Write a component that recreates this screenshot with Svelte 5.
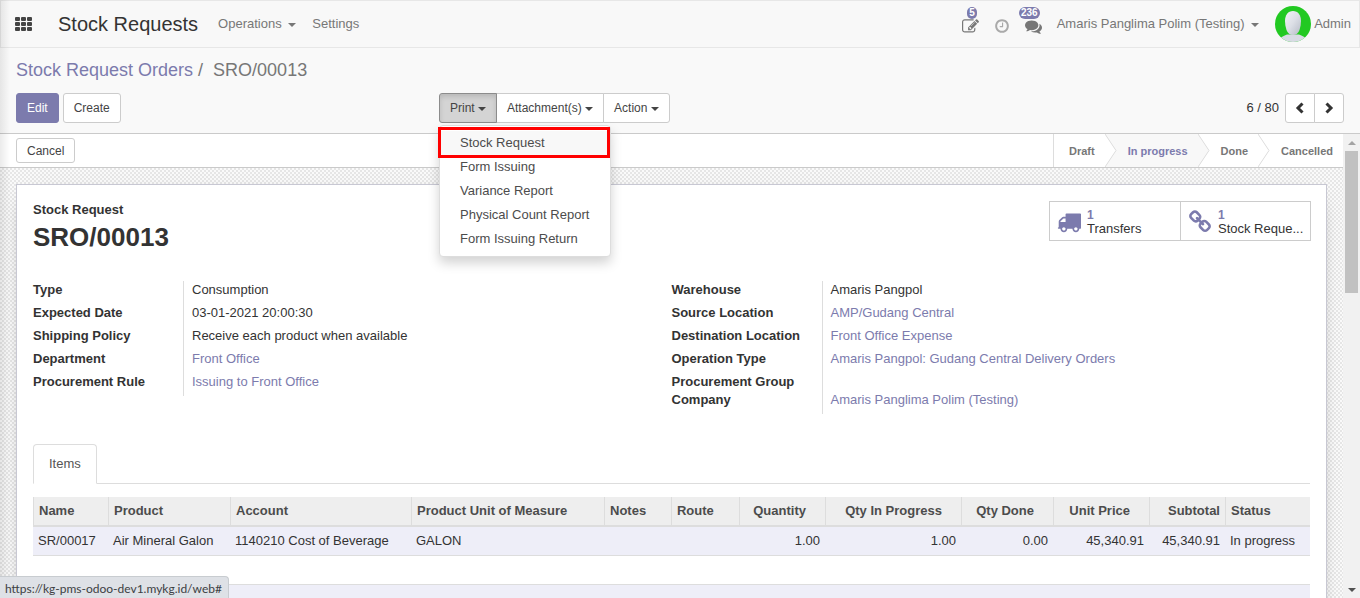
<script>
  const columns = [
    { title: 'Name', size: 75, value: 'SR/00017' },
    { title: 'Product', size: 122, value: 'Air Mineral Galon' },
    { title: 'Account', size: 181, value: '1140210 Cost of Beverage' },
    { title: 'Product Unit of Measure', size: 193, value: 'GALON' },
    { title: 'Notes', size: 67, value: '' },
    { title: 'Route', size: 68, value: '' },
    { title: 'Quantity', size: 86, value: '1.00', kind: 'num sortable' },
    { title: 'Qty In Progress', size: 136, value: '1.00', kind: 'num sortable' },
    { title: 'Qty Done', size: 92, value: '0.00', kind: 'num sortable' },
    { title: 'Unit Price', size: 96, value: '45,340.91', kind: 'num sortable' },
    { title: 'Subtotal', size: 76, value: '45,340.91', kind: 'num' },
    { title: 'Status', size: 85, value: 'In progress' }
  ];
  const total = columns.reduce((sum, c) => sum + c.size, 0);

  const groups = [
    [
      { label: 'Type', value: 'Consumption' },
      { label: 'Expected Date', value: '03-01-2021 20:00:30' },
      { label: 'Shipping Policy', value: 'Receive each product when available' },
      { label: 'Department', value: 'Front Office', link: true },
      { label: 'Procurement Rule', value: 'Issuing to Front Office', link: true }
    ],
    [
      { label: 'Warehouse', value: 'Amaris Pangpol' },
      { label: 'Source Location', value: 'AMP/Gudang Central', link: true },
      { label: 'Destination Location', value: 'Front Office Expense', link: true },
      { label: 'Operation Type', value: 'Amaris Pangpol: Gudang Central Delivery Orders', link: true },
      { label: 'Procurement Group', value: '' },
      { label: 'Company', value: 'Amaris Panglima Polim (Testing)', link: true }
    ]
  ];

  const reports = ['Stock Request', 'Form Issuing', 'Variance Report', 'Physical Count Report', 'Form Issuing Return'];
  const states = ['Draft', 'In progress', 'Done', 'Cancelled'];
  let current = $state('In progress');
  let printOpen = $state(true);

  const icons = {
    edit: 'M888 1184l116-116-152-152-116 116v56h96v96h56zm440-720q-16-16-33 1l-350 350q-17 17-1 33t33-1l350-350q17-17 1-33zm80 594v190q0 119-84.5 203.5t-203.5 84.5h-832q-119 0-203.5-84.5t-84.5-203.5v-832q0-119 84.5-203.5t203.5-84.5h832q63 0 117 25 15 7 18 23 3 17-9 29l-49 49q-14 14-32 8-23-6-45-6h-832q-66 0-113 47t-47 113v832q0 66 47 113t113 47h832q66 0 113-47t47-113v-126q0-13 9-22l64-64q15-15 35-7t20 29zm-96-738l288 288-672 672h-288v-288zm444 132l-92 92-288-288 92-92q28-28 68-28t68 28l152 152q28 28 28 68t-28 68z',
    clock: 'M1024 544v448q0 14-9 23t-23 9h-320q-14 0-23-9t-9-23v-64q0-14 9-23t23-9h224v-352q0-14 9-23t23-9h64q14 0 23 9t9 23zm416 352q0-148-73-273t-198-198-273-73-273 73-198 198-73 273 73 273 198 198 273 73 273-73 198-198 73-273zm224 0q0 209-103 385.5t-279.5 279.5-385.5 103-385.5-103-279.5-279.5-103-385.5 103-385.5 279.5-279.5 385.5-103 385.5 103 279.5 279.5 103 385.5z',
    comments: 'M1408 768q0 139-94 257t-256.5 186.5-353.5 68.5q-86 0-176-16-124 88-278 128-36 9-86 16h-3q-11 0-20.5-8t-11.5-21q-1-3-1-6.5t.5-6.5 2-6l2.5-5 3.5-5.5 4-5 4.5-5 4-4.5q5-6 23-25t26-29.5 22.5-29 25-38.5 20.5-44q-124-72-195-177t-71-224q0-139 94-257t256.5-186.5 353.5-68.5 353.5 68.5 256.5 186.5 94 257zm384 256q0 120-71 224.5t-195 176.5q10 24 20.5 44t25 38.5 22.5 29 26 29.5 23 25q1 1 4 4.5t4.5 5 4 5 3.5 5.5l2.5 5 2 6 .5 6.5-1 6.5q-3 14-13 22t-22 7q-50-7-86-16-154-40-278-128-90 16-176 16-271 0-472-132 58 4 88 4 161 0 309-45t264-129q125-92 192-212t67-254q0-77-23-152 129 71 204 178t75 230z',
    truck: 'M640 1408q0-52-38-90t-90-38-90 38-38 90 38 90 90 38 90-38 38-90zm-384-512h384v-256h-158q-13 0-22 9l-195 195q-9 9-9 22v30zm1280 512q0-52-38-90t-90-38-90 38-38 90 38 90 90 38 90-38 38-90zm256-1088v1024q0 15-4 26.5t-13.5 18.5-16.5 11.5-23.5 6-22.5 2-25.5 0-22.5-.5q0 106-75 181t-181 75-181-75-75-181h-384q0 106-75 181t-181 75-181-75-75-181h-64q-3 0-22.5.5t-25.5 0-22.5-2-23.5-6-16.5-11.5-13.5-18.5-4-26.5q0-26 19-45t45-19v-320q0-8-.5-35t0-38 2.5-34.5 6.5-37 14-30.5 22.5-30l198-198q19-19 50.5-32t58.5-13h160v-192q0-26 19-45t45-19h1024q26 0 45 19t19 45z',
    chain: 'M1520 1216q0-40-28-68l-208-208q-28-28-68-28-42 0-72 32 3 3 19 18.5t21.5 21.5 15 19 13 25.5 3.5 27.5q0 40-28 68t-68 28q-15 0-27.5-3.5t-25.5-13-19-15-21.5-21.5-18.5-19q-33 31-33 73 0 40 28 68l206 207q27 27 68 27 40 0 68-26l147-146q28-28 28-67zm-703-705q0-40-28-68l-206-207q-28-28-68-28-39 0-68 27l-147 146q-28 28-28 67 0 40 28 68l208 208q27 27 68 27 42 0 72-31-3-3-19-18.5t-21.5-21.5-15-19-13-25.5-3.5-27.5q0-40 28-68t68-28q15 0 27.5 3.5t25.5 13 19 15 21.5 21.5 18.5 19q33-31 33-73zm895 705q0 120-85 203l-147 146q-83 83-203 83-121 0-204-85l-206-207q-83-83-83-203 0-123 88-209l-88-88q-86 88-208 88-120 0-204-84l-208-208q-84-84-84-204t85-203l147-146q83-83 203-83 121 0 204 85l206 207q83 83 83 203 0 123-88 209l88 88q86-88 208-88 120 0 204 84l208 208q84 84 84 204z'
  };
</script>

{#snippet icon(name, size)}
  <svg class="icon" width={size} height={size} viewBox="0 0 1792 1792" aria-hidden="true"><path d={icons[name]} /></svg>
{/snippet}

<div class="app">
  <nav class="navbar">
    <button class="plain apps" aria-label="Applications">
      <svg width="18" height="14" viewBox="0 0 18 14" aria-hidden="true">
        {#each [0, 5, 10] as y}
          {#each [0, 6, 12] as x}
            <rect {x} {y} width="5" height="4" rx="1" />
          {/each}
        {/each}
      </svg>
    </button>
    <a class="brand" href="#home">Stock Requests</a>
    <button class="plain menu">Operations <i class="caret"></i></button>
    <a class="menu" href="#settings">Settings</a>
    <div class="systray">
      <button class="plain tray" aria-label="Notes">{@render icon('edit', 17)}<span class="badge">5</span></button>
      <button class="plain tray clock" aria-label="Activities">{@render icon('clock', 16)}</button>
      <button class="plain tray" aria-label="Conversations">{@render icon('comments', 17)}<span class="badge">236</span></button>
      <button class="plain company">Amaris Panglima Polim (Testing) <i class="caret"></i></button>
      <button class="plain user">
        <svg width="36" height="36" viewBox="0 0 36 36" aria-hidden="true">
          <defs>
            <clipPath id="round"><circle cx="18" cy="18" r="18" /></clipPath>
            <linearGradient id="face" x1="0" y1="0" x2="1" y2="1">
              <stop offset="0" stop-color="#f2f3f6" />
              <stop offset="0.5" stop-color="#dcdfe6" />
              <stop offset="1" stop-color="#b5bac6" />
            </linearGradient>
          </defs>
          <g clip-path="url(#round)">
            <rect width="36" height="36" fill="#22c922" />
            <path d="M3 36c1-4 4-5.500 9-7.500h12c5 2 8 3.500 9 7.500z" fill="#d8dbe4" />
            <path d="M18 5c5 0 8 4 8 10 0 3-.5 6-1.500 9-1 3-3.500 5-6.500 5s-5.500-2-6.500-5c-1-3-1.500-6-1.500-9 0-6 3-10 8-10z" fill="url(#face)" />
          </g>
        </svg>
        <span>Admin</span>
      </button>
    </div>
  </nav>

  <header class="panel">
    <ol class="crumbs">
      <li><a href="#orders">Stock Request Orders</a></li>
      <li class="here">SRO/00013</li>
    </ol>
    <div class="actions">
      <div class="main-buttons">
        <button class="btn primary">Edit</button>
        <button class="btn">Create</button>
      </div>
      <div class="side">
        <div class="group">
          <button class="btn" class:pressed={printOpen} aria-expanded={printOpen} onclick={() => (printOpen = !printOpen)}>Print <i class="caret"></i></button>
          <button class="btn">Attachment(s) <i class="caret"></i></button>
          <button class="btn">Action <i class="caret"></i></button>
          {#if printOpen}
            <ul class="dropdown">
              {#each reports as report, i}
                <li class:marked={i === 0}><a href="#report">{report}</a></li>
              {/each}
            </ul>
          {/if}
        </div>
        <div class="pager">
          <span>6 / 80</span>
          <div class="group">
            <button class="btn step" aria-label="Previous"><svg width="10" height="12" viewBox="0 0 10 12"><path d="M7.500 1.500 3 6l4.500 4.500" /></svg></button>
            <button class="btn step" aria-label="Next"><svg width="10" height="12" viewBox="0 0 10 12"><path d="M2.500 1.500 7 6l-4.500 4.500" /></svg></button>
          </div>
        </div>
      </div>
    </div>
  </header>

  <div class="body">
    <main class="content">
      <div class="statusbar">
        <button class="btn small">Cancel</button>
        <div class="states">
          {#each states as state, i}
            <button class="plain state" class:current={state === current} onclick={() => (current = state)}>
              {state}
              {#if i < states.length - 1}
                <svg class="arrow" width="12" height="33" viewBox="0 0 12 33" aria-hidden="true"><path d="M0 0 11 16.500 0 33" /></svg>
              {/if}
            </button>
          {/each}
        </div>
      </div>

      <div class="backdrop">
        <section class="sheet">
          <div class="top">
            <div class="title">
              <strong>Stock Request</strong>
              <h1>SRO/00013</h1>
            </div>
            <div class="stats">
              <button class="plain stat">{@render icon('truck', 24)}<span><b>1</b><em>Transfers</em></span></button>
              <button class="plain stat">{@render icon('chain', 24)}<span><b>1</b><em>Stock Reque...</em></span></button>
            </div>
          </div>

          <div class="fields">
            {#each groups as group}
              <dl>
                {#each group as field}
                  <div class="field" class:empty={!field.value}>
                    <dt>{field.label}</dt>
                    <dd>{#if field.link}<a href="#record">{field.value}</a>{:else}{field.value}{/if}</dd>
                  </div>
                {/each}
              </dl>
            {/each}
          </div>

          <div class="tabs"><button class="plain tab">Items</button></div>

          <table>
            <colgroup>
              {#each columns as c}<col style="width: {(c.size / total) * 100}%" />{/each}
            </colgroup>
            <thead>
              <tr>{#each columns as c}<th class={c.kind}>{c.title}</th>{/each}</tr>
            </thead>
            <tbody>
              <tr>{#each columns as c}<td class={c.kind}>{c.value}</td>{/each}</tr>
              <tr class="blank"><td colspan={columns.length}></td></tr>
            </tbody>
            <tfoot>
              <tr><td colspan={columns.length}></td></tr>
            </tfoot>
          </table>
        </section>
      </div>
    </main>
    <div class="scrollbar" aria-hidden="true">
      <i class="up"></i>
      <div class="track"><div class="thumb"></div></div>
      <i class="down"></i>
    </div>
  </div>
  <div class="address">https://kg-pms-odoo-dev1.mykg.id/web#</div>
</div>

<style>
  :global(body) {
    margin: 0;
  }
  .app {
    --brand: #7c7bad;
    position: relative;
    display: flex;
    flex-direction: column;
    height: 100vh;
    overflow: hidden;
    font: 13px/18px "Liberation Sans", Arial, sans-serif;
    color: #333;
    background: #f9f9f9;
  }
  .app::before {
    content: "";
    position: absolute;
    inset: 0 auto 0 0;
    width: 10px;
    background: linear-gradient(to right, rgba(0, 0, 0, 0.08), transparent);
    pointer-events: none;
    z-index: 2;
  }
  .app *,
  .app *::before {
    box-sizing: border-box;
  }
  a {
    color: var(--brand);
    text-decoration: none;
  }
  button {
    font: inherit;
    cursor: pointer;
  }
  .plain {
    border: 0;
    padding: 0;
    background: none;
    color: inherit;
  }
  .icon {
    display: block;
    fill: currentColor;
  }
  .caret {
    display: inline-block;
    border: 4px solid transparent;
    border-top-color: currentColor;
    border-bottom: 0;
    vertical-align: middle;
  }

  .navbar {
    display: flex;
    align-items: center;
    flex: none;
    height: 48px;
    border: 1px solid #e7e7e7;
    background: #f8f8f8;
    color: #777;
  }
  .apps {
    padding: 0 14px;
    fill: #444;
  }
  .apps svg {
    display: block;
  }
  .brand {
    margin: 0 20px 0 11px;
    font-size: 20px;
    color: #333;
  }
  .menu {
    margin-right: 16px;
    color: #777;
  }
  .menu .caret,
  .company .caret {
    margin-left: 3px;
  }
  .systray {
    display: flex;
    align-items: center;
    margin-left: auto;
    padding-right: 8px;
  }
  .tray {
    position: relative;
    margin: 4px 15px 0 0;
  }
  .clock {
    color: #aaa;
  }
  .badge {
    position: absolute;
    right: 2px;
    bottom: 16px;
    padding: 1px 2px;
    border-radius: 10px;
    background: var(--brand);
    color: #fff;
    font: bold 10px/10px "Liberation Sans", Arial, sans-serif;
  }
  .user {
    display: flex;
    align-items: center;
    gap: 3px;
    margin-left: 16px;
  }

  .panel {
    flex: none;
    padding: 12px 16px 10px;
    border-bottom: 1px solid #cacaca;
  }
  .crumbs {
    display: flex;
    margin: 0 0 13px;
    padding: 0;
    list-style: none;
    font-size: 18px;
    line-height: 20px;
  }
  .here {
    color: #777;
  }
  .here::before {
    content: "/";
    padding: 0 10px 0 5px;
  }
  .actions {
    display: grid;
    grid-template-columns: 423fr 905fr;
  }
  .main-buttons {
    display: flex;
    gap: 4px;
  }
  .side {
    display: flex;
    justify-content: space-between;
  }
  .btn {
    height: 30px;
    padding: 0 10px;
    border: 1px solid #ccc;
    border-radius: 3px;
    background: #fff;
    color: #444;
    font-size: 12px;
  }
  .btn.primary {
    border-color: var(--brand);
    background: var(--brand);
    color: #fff;
  }
  .group {
    position: relative;
    display: flex;
  }
  .group .btn {
    border-radius: 0;
    margin-left: -1px;
  }
  .group .btn:first-child {
    margin-left: 0;
    border-radius: 3px 0 0 3px;
  }
  .group .btn:nth-of-type(n + 2):last-of-type {
    border-radius: 0 3px 3px 0;
  }
  .group .pressed {
    position: relative;
    border-color: #8c8c8c;
    background: #d4d4d4;
    box-shadow: inset 0 3px 5px rgba(0, 0, 0, 0.125);
    z-index: 1;
  }
  .dropdown {
    position: absolute;
    top: 100%;
    left: 0;
    margin: 2px 0 0;
    padding: 5px 0;
    width: 172px;
    border: 1px solid #ddd;
    border-radius: 4px;
    background: #fff;
    box-shadow: 0 6px 12px rgba(0, 0, 0, 0.175);
    list-style: none;
    z-index: 3;
  }
  .dropdown a {
    display: block;
    padding: 3px 20px;
    color: #4c4c4c;
  }
  .marked {
    position: relative;
    background: #f8f8f8;
  }
  .marked::before {
    content: "";
    position: absolute;
    inset: -4px 0 -3px -2px;
    border: 3px solid #f00;
  }
  .pager {
    display: flex;
    align-items: center;
    gap: 6px;
  }
  .group .step {
    padding: 0 9px;
  }
  .step svg {
    display: block;
    fill: none;
    stroke: #333;
    stroke-width: 3;
  }

  .body {
    display: flex;
    flex: 1;
    min-height: 0;
  }
  .content {
    flex: 1;
    min-width: 0;
    overflow: hidden;
    background: #fff;
  }
  .statusbar {
    display: flex;
    justify-content: space-between;
    align-items: center;
    height: 34px;
    padding-left: 16px;
    border-bottom: 1px solid #cacaca;
  }
  .btn.small {
    height: 25px;
  }
  .states {
    display: flex;
    height: 33px;
    border-left: 1px solid #ddd;
  }
  .state {
    position: relative;
    padding: 0 10px 0 23px;
    font-size: 11px;
    font-weight: bold;
    color: #777;
  }
  .state:first-child {
    padding-left: 15px;
  }
  .current {
    background: #f8f8f8;
    color: var(--brand);
  }
  .arrow {
    position: absolute;
    left: 100%;
    top: 0;
    fill: #fff;
    stroke: #ddd;
    z-index: 1;
  }
  .current .arrow {
    fill: #f8f8f8;
  }

  .backdrop {
    padding: 16px;
    background: repeating-conic-gradient(#e6e6e6 0 25%, #fafafa 0 50%) 0 0 / 4px 4px;
  }
  .sheet {
    min-height: 500px;
    padding: 16px;
    border: 1px solid #c8c8d3;
    background: #fff;
    box-shadow: 0 5px 20px -15px #000;
  }
  .top {
    display: flex;
    justify-content: space-between;
    align-items: flex-start;
  }
  .title strong {
    display: block;
    line-height: 17px;
  }
  h1 {
    margin: 5px 0 0;
    font-size: 26px;
    line-height: 28px;
  }
  .stats {
    display: flex;
    margin-right: -1px;
    border: 1px solid #ccc;
  }
  .stat {
    display: flex;
    align-items: center;
    gap: 6px;
    min-width: 130px;
    height: 38px;
    padding: 2px 6px 0 7px;
    text-align: left;
    color: var(--brand);
  }
  .stat .icon {
    flex: none;
  }
  .stat + .stat {
    border-left: 1px solid #ccc;
  }
  .stat span {
    line-height: 14px;
    white-space: nowrap;
  }
  .stat b,
  .stat em {
    display: block;
    font-style: normal;
  }
  .stat b {
    font-size: 12px;
  }
  .stat em {
    color: #333;
  }
  .fields {
    display: grid;
    grid-template-columns: 1fr 1fr;
    align-items: start;
    margin-top: 30px;
  }
  dl {
    margin: 0;
  }
  .field {
    display: grid;
    grid-template-columns: 150px 1fr;
  }
  dt,
  dd {
    margin: 0;
    padding-bottom: 5px;
  }
  dt {
    font-weight: bold;
  }
  dd {
    padding-left: 8px;
    border-left: 1px solid #ddd;
  }
  .empty > * {
    height: 18px;
    padding-bottom: 0;
  }
  .tabs {
    display: flex;
    margin: 30px 0 13px;
    border-bottom: 1px solid #ddd;
  }
  .tab {
    height: 40px;
    margin-bottom: -1px;
    padding: 0 15px;
    border: 1px solid #ddd;
    border-bottom-color: #fff;
    border-radius: 4px 4px 0 0;
    background: #fff;
    color: #555;
  }
  table {
    width: 100%;
    table-layout: fixed;
    border-spacing: 0;
  }
  th,
  td {
    height: 29px;
    padding: 0 5px;
    border-bottom: 1px solid #ddd;
    text-align: left;
    white-space: nowrap;
  }
  th {
    height: 30px;
    border-bottom-width: 2px;
    border-left: 1px solid #ddd;
    background: #eee;
    color: #4c4c4c;
  }
  td {
    background: #eeeef8;
  }
  .blank td {
    background: #fff;
  }
  .num {
    text-align: right;
  }
  th.sortable {
    padding-right: 19px;
  }

  .scrollbar {
    display: flex;
    flex-direction: column;
    align-items: center;
    flex: none;
    width: 17px;
    padding: 7px 0 6px;
    background: #f1f1f1;
  }
  .track {
    flex: 1;
    width: 13px;
    padding: 6px 0;
  }
  .thumb {
    height: 33%;
    background: #c1c1c1;
  }
  .up,
  .down {
    border: 4px solid transparent;
  }
  .up {
    border-top: 0;
    border-bottom-color: #a3a3a3;
  }
  .down {
    border-bottom: 0;
    border-top-color: #505050;
  }
  .address {
    position: absolute;
    left: 0;
    bottom: 0;
    padding: 3px 6px 0 5px;
    border: solid #c8ccd0;
    border-width: 1px 1px 0 0;
    border-radius: 0 4px 0 0;
    background: #dee1e6;
    color: #3c4043;
    font: 12px/18px Lato, "Noto Sans", sans-serif;
    z-index: 3;
  }
</style>
